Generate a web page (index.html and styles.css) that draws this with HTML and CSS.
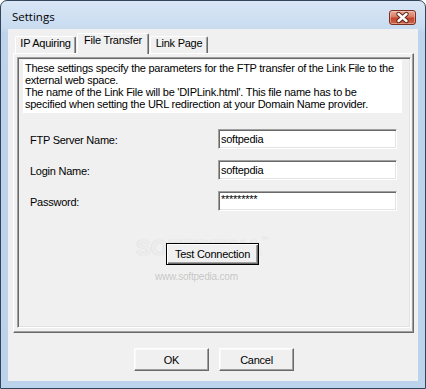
FILE: index.html
```html
<!DOCTYPE html>
<html lang="en">
<head>
  <meta charset="UTF-8">
  <title>Settings</title>
  <meta name="viewport" content="width=device-width, initial-scale=1.0">
  <link rel="stylesheet" href="styles.css">
</head>
<body>
  <div class="window">
    <div class="titlebar">
      <span class="title">Settings</span>
      <button class="close" aria-label="Close">
        <svg width="27" height="15" viewBox="0 0 27 15">
          <path d="M9.5 4 L17.5 11 M17.5 4 L9.5 11" stroke="#5e261c" stroke-width="4.4" stroke-linecap="round"/>
          <path d="M9.5 4 L17.5 11 M17.5 4 L9.5 11" stroke="#ffffff" stroke-width="2.4" stroke-linecap="round"/>
        </svg>
      </button>
    </div>

    <div class="client">
      <div class="tabs">
        <div class="tab tab-ip">IP Aquiring</div>
        <div class="tab tab-ftp active">File Transfer</div>
        <div class="tab tab-link">Link Page</div>
      </div>

      <div class="pane">
        <div class="group">
          <div class="desc">
            These settings specify the parameters for the FTP transfer of the Link File to the<br>
            external web space.<br>
            The name of the Link File will be 'DIPLink.html'. This file name has to be<br>
            specified when setting the URL redirection at your Domain Name provider.
          </div>

          <div class="fields">
            <div class="row">
              <label for="server">FTP Server Name:</label>
              <input class="field" id="server" type="text" value="softpedia">
            </div>
            <div class="row">
              <label for="login">Login Name:</label>
              <input class="field" id="login" type="text" value="softepdia">
            </div>
            <div class="row">
              <label for="pass">Password:</label>
              <input class="field field-secret" id="pass" type="text" value="*********">
            </div>
          </div>

          <div class="test-row">
            <button class="btn btn-default">Test Connection</button>
          </div>

          <!-- watermark sits under the button, like in the capture -->
          <div class="watermark">
            <span class="wm-logo">SOFTPEDIA<sup>™</sup></span>
            <span class="wm-url">www.softpedia.com</span>
          </div>
        </div>
      </div>

      <div class="actions">
        <button class="btn">OK</button>
        <button class="btn">Cancel</button>
      </div>
    </div>
  </div>
</body>
</html>
```

FILE: styles.css
```css
body {
  margin: 0;
  background: #ffffff;
  font-family: "Liberation Sans", Arial, sans-serif;
  font-size: 11px;
  letter-spacing: -0.25px;
  color: #000;
}
.window {
  width: 426px;
  height: 389px;
  box-sizing: border-box;
  border: 1px solid #33455a;
  border-radius: 7px 7px 0 0;
  background: linear-gradient(180deg, #d8e6f5 0, #c9dcf0 26px, #bed4ec 32px, #bcd3eb 100%);
  padding: 0 7px 7px;
  display: flex;
  flex-direction: column;
}
.titlebar {
  height: 28px;
  display: flex;
  justify-content: space-between;
  align-items: flex-start;
  padding: 0 2px 0 4px;
}
.title {
  margin-top: 8px;
  font-family: "Open Sans", "Noto Sans", sans-serif;
  font-size: 11.5px;
  letter-spacing: 0;
  line-height: 16px;
  color: #000;
}
.close {
  margin-top: 9px;
  width: 27px;
  height: 15px;
  padding: 0;
  border: 1px solid #7a3020;
  border-radius: 3px;
  background: linear-gradient(180deg, #e9ad9c 0, #d77a62 45%, #c2452b 55%, #cd6446 100%);
  box-shadow: inset 0 0 0 1px rgba(255, 220, 210, 0.45);
  display: flex;
  align-items: center;
  justify-content: center;
  box-sizing: border-box;
}
.close svg {
  display: block;
  margin: -1px;
}
.client {
  flex: 1;
  background: #f0f0f0;
  padding: 4px 4px 0 5px;
}
.tabs {
  display: flex;
  align-items: flex-end;
  height: 20px;
  position: relative;
  z-index: 1;
}
.tab {
  box-sizing: border-box;
  height: 17px;
  border: 1px solid;
  border-bottom: 0;
  border-color: #ffffff #696969 transparent #ffffff;
  box-shadow: inset -1px 0 #a0a0a0;
  border-radius: 2px 2px 0 0;
  background: #f0f0f0;
  text-align: center;
  line-height: 13px;
  white-space: nowrap;
}
.tab-ip {
  width: 61px;
  margin-left: 2px;
}
.tab-ftp {
  width: 72px;
  margin-left: 1px;
}
.tab-link {
  width: 58px;
  margin-left: 1px;
}
.tab.active {
  height: 21px;
  margin-bottom: -1px;
}
.pane {
  box-sizing: border-box;
  width: 401px;
  height: 280px;
  border: 1px solid;
  border-color: #ffffff #696969 #696969 #ffffff;
  box-shadow: inset -1px -1px #a0a0a0;
  padding: 3px 2px 4px 3px;
}
.group {
  position: relative;
  box-sizing: border-box;
  height: 100%;
  border: 1px solid;
  border-color: #a0a0a0 #ffffff #ffffff #a0a0a0;
  box-shadow: inset 1px 1px #696969, inset -1px -1px #e3e3e3;
  padding: 2px 0 0 5px;
}
.desc {
  box-sizing: border-box;
  width: 379px;
  height: 53px;
  background: #ffffff;
  padding: 2px 2px 3px;
  line-height: 12px;
  white-space: nowrap;
}
.fields {
  margin-top: 16px;
  display: flex;
  flex-direction: column;
  gap: 11px;
}
.row {
  display: flex;
  align-items: center;
  height: 20px;
  padding-left: 7px;
}
.row label {
  width: 188px;
  padding-top: 2px;
}
.field {
  box-sizing: border-box;
  width: 179px;
  height: 20px;
  margin: 0;
  border: 1px solid;
  border-color: #a0a0a0 #ffffff #ffffff #a0a0a0;
  box-shadow: inset 1px 1px #696969, inset -1px -1px #e3e3e3;
  background: #ffffff;
  padding: 0 2px;
  font: inherit;
  letter-spacing: inherit;
  color: #000;
  outline: none;
}
.field-secret {
  padding-bottom: 4px;
}
.test-row {
  position: relative;
  z-index: 1;
  margin-top: 32px;
  padding-left: 143px;
}
.btn {
  box-sizing: border-box;
  width: 75px;
  height: 23px;
  margin: 0;
  padding: 0;
  border: 1px solid;
  border-color: #ffffff #696969 #696969 #ffffff;
  box-shadow: inset -1px -1px #a0a0a0, inset 1px 1px #f8f8f8;
  background: #f0f0f0;
  font: inherit;
  letter-spacing: inherit;
  color: #000;
}
.btn-default {
  width: 93px;
  height: 22px;
  border-color: #000;
  box-shadow: inset 1px 1px #ffffff, inset -1px -1px #696969, inset -2px -2px #a0a0a0;
}
.actions {
  display: flex;
  justify-content: center;
  gap: 10px;
  margin-top: 15px;
  padding-left: 1px;
}
.watermark {
  position: absolute;
  left: 118px;
  top: 177px;
  display: flex;
  flex-direction: column;
  align-items: center;
  pointer-events: none;
}
.wm-logo {
  font-family: "Liberation Sans", Arial, sans-serif;
  font-weight: bold;
  font-size: 22px;
  letter-spacing: 0;
  line-height: 26px;
  color: rgba(255, 255, 255, 0.7);
  text-shadow: 0 0 1px rgba(140, 140, 140, 0.45);
}
.wm-logo sup {
  font-size: 7px;
  vertical-align: top;
  line-height: 10px;
}
.wm-url {
  margin-top: 10px;
  margin-left: -12px;
  font-size: 10px;
  letter-spacing: -0.2px;
  line-height: 12px;
  color: #c4c4c4;
  text-shadow: 0 0 1px #ffffff;
}
```
